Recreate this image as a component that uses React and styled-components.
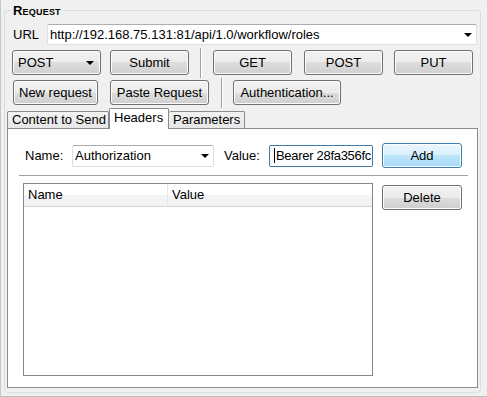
import React from 'react';
import styled, { createGlobalStyle, css } from 'styled-components';

const GlobalStyle = createGlobalStyle`
  html, body {
    margin: 0;
    padding: 0;
    background: #f0f0f0;
  }
  body {
    font-family: "Liberation Sans", Arial, sans-serif;
    font-size: 13px;
    color: #000;
  }
`;

const Frame = styled.div`
  box-sizing: border-box;
  width: 487px;
  height: 397px;
  padding: 3px 0 0 4px;
  background: #f0f0f0;
  border-left: 1px solid #c8c8c8;
  border-bottom: 1px solid #bcbcbc;
  overflow: hidden;
`;

const Group = styled.fieldset`
  box-sizing: border-box;
  width: 477px;
  margin: 0 0 0 -1px;
  padding: 0 2px 4px 2px;
  border: 1px solid #d5dfe5;
  border-radius: 4px;
  min-width: 0;
`;

const Legend = styled.legend`
  margin-left: 4px;
  padding: 0 2px;
  line-height: 15px;
  font-size: 13px;
  font-weight: bold;
  font-variant: small-caps;
  letter-spacing: 0.2px;
`;

const Row = styled.div`
  display: flex;
  align-items: center;
  height: ${p => p.$h || 25}px;
  margin-top: ${p => p.$mt || 0}px;
  padding-left: ${p => p.$pl || 0}px;
`;

const Label = styled.span`
  display: inline-block;
  width: ${p => p.$w}px;
  margin-left: ${p => p.$ml || 0}px;
  white-space: nowrap;
`;

const buttonLook = css`
  box-sizing: border-box;
  height: 25px;
  border: 1px solid #707070;
  border-radius: 3px;
  background: linear-gradient(#f2f2f2 0%, #ebebeb 50%, #dddddd 50%, #cfcfcf 100%);
  box-shadow: inset 0 0 0 1px #fcfcfc;
  font-family: "Liberation Sans", Arial, sans-serif;
  font-size: 13px;
  color: #000;
`;

const Button = styled.button`
  ${buttonLook}
  width: ${p => p.$w}px;
  margin-left: ${p => p.$ml || 0}px;
  margin-top: ${p => p.$mt || 0}px;
  padding: 0;
  flex: none;
  ${p => p.$primary && css`
    border-color: #3c7fb1;
    background: linear-gradient(#eaf6fd 0%, #d9f0fc 50%, #bee6fd 50%, #a7d9f5 100%);
  `}
`;

const Arrow = styled.span`
  width: 0;
  height: 0;
  border-left: 4px solid transparent;
  border-right: 4px solid transparent;
  border-top: 4px solid #000;
  flex: none;
`;

const DropButton = styled.div`
  ${buttonLook}
  display: flex;
  align-items: center;
  justify-content: space-between;
  width: ${p => p.$w}px;
  padding: 0 6px 0 5px;
  flex: none;
`;

const Combo = styled.div`
  box-sizing: border-box;
  display: flex;
  align-items: center;
  justify-content: space-between;
  width: ${p => p.$w}px;
  height: ${p => p.$h || 21}px;
  padding: 0 4px 0 2px;
  background: #fff;
  border: 1px solid #dbdfe6;
  border-top-color: #abadb3;
  border-radius: 2px;
  flex: none;
`;

const TextField = styled.div`
  box-sizing: border-box;
  display: flex;
  align-items: center;
  width: ${p => p.$w}px;
  height: 22px;
  padding: 0 1px 0 4px;
  background: #fff;
  border: 1px solid #3d7bad;
  border-radius: 2px;
  overflow: hidden;
  white-space: nowrap;
  letter-spacing: -0.3px;
  flex: none;
`;

const Caret = styled.span`
  display: inline-block;
  width: 1px;
  height: 15px;
  margin-right: 1px;
  background: #000;
  flex: none;
`;

const VSep = styled.div`
  width: 1px;
  height: 30px;
  margin-left: ${p => p.$ml}px;
  margin-right: ${p => p.$mr}px;
  background: #a0a0a0;
  border-right: 1px solid #fff;
  flex: none;
`;

const TabBar = styled.div`
  display: flex;
  align-items: flex-end;
  height: 21px;
  margin-top: 3px;
  margin-bottom: -1px;
  position: relative;
  z-index: 1;
`;

const Tab = styled.div`
  box-sizing: border-box;
  height: ${p => (p.$active ? 21 : 17)}px;
  margin-bottom: ${p => (p.$active ? 0 : 1)}px;
  width: ${p => p.$w}px;
  padding-left: 4px;
  border: 1px solid #898c95;
  border-bottom: none;
  border-left-width: ${p => (p.$first || p.$active ? 1 : 0)}px;
  line-height: ${p => (p.$active ? 18 : 15)}px;
  background: ${p => (p.$active ? '#fff' : 'linear-gradient(#f2f2f2, #e6e6e6)')};
  border-radius: 2px 2px 0 0;
  white-space: nowrap;
`;

const Panel = styled.div`
  box-sizing: border-box;
  height: 260px;
  padding: 14px 9px 11px 11px;
  background: #fff;
  border: 1px solid #898c95;
`;

const HSep = styled.div`
  height: 1px;
  margin-top: 7px;
  background: #a0a0a0;
  border-bottom: 1px solid #fff;
`;

const ListArea = styled.div`
  display: flex;
  align-items: flex-start;
  margin-top: 6px;
  padding-left: 4px;
`;

const List = styled.div`
  box-sizing: border-box;
  width: 350px;
  height: 193px;
  border: 1px solid #828790;
  background: #fff;
`;

const ListHeader = styled.div`
  display: flex;
  height: 22px;
  background: linear-gradient(#ffffff 0%, #ffffff 50%, #f3f4f6 50%, #f1f2f4 100%);
  border-bottom: 1px solid #d5d5d5;
`;

const HeaderCell = styled.div`
  box-sizing: border-box;
  width: ${p => p.$w ? `${p.$w}px` : 'auto'};
  flex: ${p => (p.$w ? 'none' : 1)};
  padding-left: 4px;
  line-height: 22px;
  border-right: ${p => (p.$w ? '1px solid #e3e5e8' : 'none')};
`;

export default function App() {
  return (
    <>
      <GlobalStyle />
      <Frame>
        <Group>
          <Legend>Request</Legend>
          <Row $h={21} $mt={6} $pl={6}>
            <Label $w={34}>URL</Label>
            <Combo $w={430}>
              <span>http://192.168.75.131:81/api/1.0/workflow/roles</span>
              <Arrow />
            </Combo>
          </Row>
          <Row $mt={5} $pl={5}>
            <DropButton $w={89}>
              <span>POST</span>
              <Arrow />
            </DropButton>
            <Button $w={79} $ml={9}>Submit</Button>
            <VSep $ml={11} $mr={11} />
            <Button $w={79}>GET</Button>
            <Button $w={79} $ml={12}>POST</Button>
            <Button $w={79} $ml={11}>PUT</Button>
          </Row>
          <Row $mt={5} $pl={6}>
            <Button $w={85}>New request</Button>
            <Button $w={99} $ml={12}>Paste Request</Button>
            <VSep $ml={12} $mr={10} />
            <Button $w={108}>Authentication...</Button>
          </Row>
          <TabBar>
            <Tab $w={102} $first>Content to Send</Tab>
            <Tab $w={60} $active>Headers</Tab>
            <Tab $w={76}>Parameters</Tab>
          </TabBar>
          <Panel>
            <Row $pl={6}>
              <Label $w={47}>Name:</Label>
              <Combo $w={142} $h={22}>
                <span>Authorization</span>
                <Arrow />
              </Combo>
              <Label $w={45} $ml={10}>Value:</Label>
              <TextField $w={104}>
                <Caret />
                <span>Bearer 28fa356fc</span>
              </TextField>
              <Button $w={80} $ml={9} $primary>Add</Button>
            </Row>
            <HSep />
            <ListArea>
              <List>
                <ListHeader>
                  <HeaderCell $w={144}>Name</HeaderCell>
                  <HeaderCell>Value</HeaderCell>
                </ListHeader>
              </List>
              <Button $w={80} $ml={9} $mt={2}>Delete</Button>
            </ListArea>
          </Panel>
        </Group>
      </Frame>
    </>
  );
}
